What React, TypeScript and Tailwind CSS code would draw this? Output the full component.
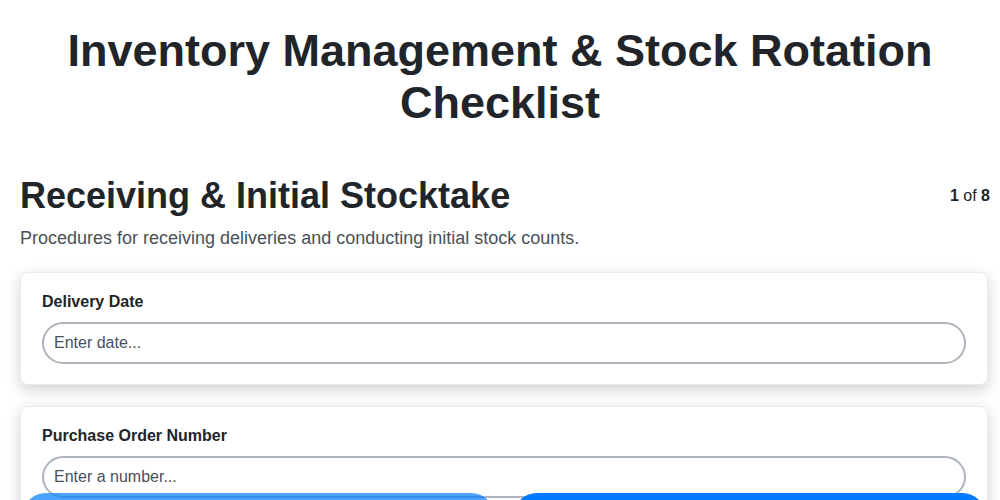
import React from "react";

const fields = [
  { label: "Delivery Date", placeholder: "Enter date..." },
  { label: "Purchase Order Number", placeholder: "Enter a number..." },
];

export default function App() {
  return (
    <div className="min-h-screen bg-white font-['Liberation_Sans',Arial,sans-serif] text-[#212529]">
      <h1 className="pt-[25px] text-center text-[45px] font-bold leading-[52px] px-16">
        Inventory Management &amp; Stock Rotation Checklist
      </h1>

      <div className="pl-5 pr-3 pt-[45px]">
        <div className="flex items-center justify-between">
          <h2 className="text-[36px] font-bold leading-[43px]">Receiving &amp; Initial Stocktake</h2>
          <div className="-mr-[2px] text-[16px] leading-6">
            <span className="font-bold">1</span> of <span className="font-bold">8</span>
          </div>
        </div>
        <p className="mt-2 text-[18px] leading-[27px] text-[#495057]">
          Procedures for receiving deliveries and conducting initial stock counts.
        </p>

        <div className="mt-5 flex flex-col gap-[21px]">
          {fields.map((f) => (
            <div
              key={f.label}
              className="rounded-lg border border-[#e9ebef] bg-white px-[21px] pt-[17px] pb-5 shadow-[0_5px_15px_rgba(0,0,0,0.18)]"
            >
              <label className="block text-[16px] font-bold leading-6">{f.label}</label>
              <input
                type="text"
                placeholder={f.placeholder}
                className="mt-2 block h-[42px] w-full rounded-full border-2 border-[#adb4bc] bg-white px-[10px] text-[16px] outline-none placeholder:text-[#4b5058]"
              />
            </div>
          ))}
        </div>

        <div className="relative -mt-[26px] flex gap-[18px] px-[2px] pb-4">
          <button
            disabled
            className="h-12 flex-1 rounded-full bg-[#007bff] text-[16px] font-bold text-white opacity-70"
          >
            Previous
          </button>
          <button className="h-12 flex-1 rounded-full bg-[#007bff] text-[16px] font-bold text-white">
            Next
          </button>
        </div>
      </div>
    </div>
  );
}
